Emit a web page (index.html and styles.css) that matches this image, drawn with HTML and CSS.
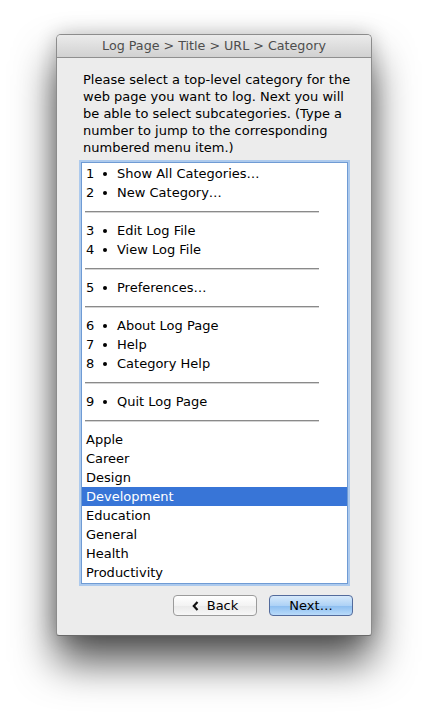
FILE: index.html
```html
<!DOCTYPE html>
<html>
<head>
<meta charset="utf-8">
<link rel="stylesheet" href="styles.css">
</head>
<body>
<div class="window">
  <div class="titlebar">Log Page &gt; Title &gt; URL &gt; Category</div>
  <div class="content">
    <p class="prompt">Please select a top-level category for the web page you want to log. Next you will be able to select subcategories. (Type a number to jump to the corresponding numbered menu item.)</p>
    <div class="listbox">
      <div class="item"><span class="num">1</span><span class="dot"></span>Show All Categories…</div>
      <div class="item"><span class="num">2</span><span class="dot"></span>New Category…</div>
      <div class="sep"></div>
      <div class="item"><span class="num">3</span><span class="dot"></span>Edit Log File</div>
      <div class="item"><span class="num">4</span><span class="dot"></span>View Log File</div>
      <div class="sep"></div>
      <div class="item"><span class="num">5</span><span class="dot"></span>Preferences…</div>
      <div class="sep"></div>
      <div class="item"><span class="num">6</span><span class="dot"></span>About Log Page</div>
      <div class="item"><span class="num">7</span><span class="dot"></span>Help</div>
      <div class="item"><span class="num">8</span><span class="dot"></span>Category Help</div>
      <div class="sep"></div>
      <div class="item"><span class="num">9</span><span class="dot"></span>Quit Log Page</div>
      <div class="sep"></div>
      <div class="item">Apple</div>
      <div class="item">Career</div>
      <div class="item">Design</div>
      <div class="item selected">Development</div>
      <div class="item">Education</div>
      <div class="item">General</div>
      <div class="item">Health</div>
      <div class="item">Productivity</div>
    </div>
    <div class="buttons">
      <button class="btn back"><svg class="chev" width="7" height="10" viewBox="0 0 7 10"><path d="M5.5 1 L1.8 5 L5.5 9" fill="none" stroke="#111" stroke-width="2.2"/></svg>Back</button>
      <button class="btn default">Next…</button>
    </div>
  </div>
</div>
</body>
</html>
```
FILE: styles.css
```css
html, body {
  margin: 0;
  padding: 0;
  background: #ffffff;
}
body {
  box-sizing: border-box;
  min-height: 715px;
  padding: 34px 0 0 56px;
  font-family: "DejaVu Sans", "Liberation Sans", sans-serif;
  font-size: 13px;
  color: #000;
}
.window {
  width: 314px;
  height: 600px;
  border: 1px solid #8c8c8c;
  border-bottom-color: #6a6a6a;
  border-radius: 5px 5px 3px 3px;
  background: #ececec;
  box-shadow: 0 26px 42px rgba(0, 0, 0, 0.68), 0 0 20px rgba(0, 0, 0, 0.2);
  display: flex;
  flex-direction: column;
  overflow: hidden;
}
.titlebar {
  height: 22px;
  line-height: 22px;
  text-align: center;
  color: #4d4d4d;
  font-size: 12.7px;
  background: linear-gradient(#ebebeb, #d1d1d1);
  border-bottom: 1px solid #8f8f8f;
  flex: none;
}
.content {
  padding: 13px 0 0 24px;
  display: flex;
  flex-direction: column;
}
.prompt {
  margin: 0 0 6px 2px;
  width: 270px;
  line-height: 17px;
  font-size: 13px;
}
.listbox {
  width: 265px;
  padding: 1px 0;
  background: #fff;
  border: 1px solid #6f9bd4;
  box-shadow: 0 0 0 2px rgba(140, 185, 238, 0.65);
}
.item {
  height: 19px;
  line-height: 19px;
  padding-left: 4px;
  white-space: nowrap;
  display: flex;
  align-items: center;
}
.item.selected {
  background: #3875d7;
  color: #fff;
}
.num {
  width: 17px;
  flex: none;
}
.dot {
  width: 4px;
  height: 4px;
  border-radius: 50%;
  background: #000;
  margin-right: 10px;
  flex: none;
}
.sep {
  height: 19px;
  display: flex;
  align-items: center;
  padding-left: 3px;
}
.sep::before {
  content: "";
  display: block;
  width: 234px;
  height: 1px;
  background: #8a8a8a;
  box-shadow: 0 1px 0 #d4d4d4;
}
.buttons {
  display: flex;
  justify-content: flex-end;
  gap: 12px;
  margin-top: 11px;
  padding-right: 18px;
}
.btn {
  width: 84px;
  height: 21px;
  padding: 0;
  font-family: "DejaVu Sans", "Liberation Sans", sans-serif;
  font-size: 13px;
  color: #000;
  border-radius: 4px;
  display: flex;
  align-items: center;
  justify-content: center;
  gap: 8px;
}
.btn.back {
  border: 1px solid #9b9b9b;
  background: linear-gradient(#ffffff, #f3f3f3 50%, #e9e9e9 51%, #f7f7f7);
}
.btn.default {
  border: 1px solid #536b9c;
  background: linear-gradient(#d6e9fb, #aed2f6 50%, #8bbdf0 51%, #b9dbfa);
}
.chev {
  display: block;
}
```
